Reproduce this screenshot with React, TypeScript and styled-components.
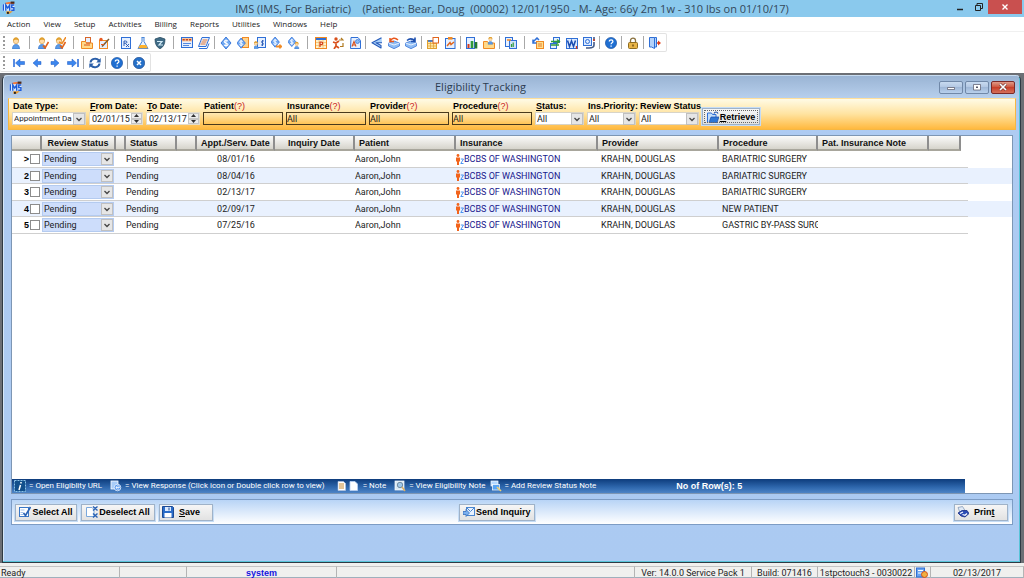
import React from "react";
import styled, { createGlobalStyle, css } from "styled-components";

const GlobalStyle = createGlobalStyle`
  * { box-sizing: border-box; }
  body { margin: 0; background: #fff; }
  button, input, select { font: inherit; color: inherit; margin: 0; padding: 0; }
`;

const uiFont = `"Roboto", "Liberation Sans", sans-serif`;
const boldFont = `"Liberation Sans", Arial, sans-serif`;
const chromeFont = `"Open Sans", "Noto Sans", sans-serif`;

/* ---------- Icons ---------- */

const B = "#2f6fd6";
const O = "#f08a24";

const person = (x = 0) => (
  <g transform={`translate(${x} 0)`}>
    <path d="M2.500 12c0-3 1-4.500 3.500-4.500s3.500 1.500 3.500 4.500z" fill="#5b9be8" stroke="#2c6cc4" strokeWidth=".6" />
    <circle cx="6" cy="4" r="2.700" fill="#ffdca8" stroke="#c78a32" strokeWidth=".5" />
    <path d="M3 4c0-5 6-5 6 0-1-1.500-4-2-6 0z" fill="#e0a030" />
  </g>
);
const diamond = (x = 0, y = 0, s = 1) => (
  <g transform={`translate(${x} ${y}) scale(${s})`}>
    <path d="M6 0l5 6-5 6-5-6z" fill="#6fa8f2" stroke={B} strokeWidth=".9" />
    <path d="M8 4.200C7 3 4.200 3.300 4.200 4.800S8 6 8 7.500 5 9 4 7.800M6 2.400v7.400" fill="none" stroke="#fff" strokeWidth="1.100" />
  </g>
);
const page = (x = 1, y = 0, w = 9, h = 12, c = B) => (
  <rect x={x + 0.5} y={y + 0.5} width={w - 1} height={h - 1} fill="#e6f0ff" stroke={c} />
);
const folder = (
  <path d="M.5 11.500v-7h4l1 1.500h6v5.500z" fill="#ffd98a" stroke={O} />
);
const check = (c: string) => <path d="M6 8.500l2 2.500L11.500 5" fill="none" stroke={c} strokeWidth="1.600" />;

const drawings: Record<string, React.ReactNode> = {
  user: person(),
  userCheck: <>{person(-1)}{check("#e0641c")}</>,
  userEdit: <>{person(-1)}{check("#e0641c")}<path d="M5 5l3 1.500L12 0" fill="none" stroke={O} strokeWidth="1.500" /></>,
  folderOpen: <>{page(4, 0, 6, 8, "#d8662a")}{folder}<path d="M3 8h6M5 6h4" stroke="#d8501c" /></>,
  memo: <>{page(1, 3, 9, 9, O)}<circle cx="3" cy="2.500" r="1.700" fill="#e85a20" /><path d="M4 9.500L11 2" stroke="#7a5a30" strokeWidth="1.500" /><path d="M3 7.500h3" stroke="#e85a20" /></>,
  rx: <>{page(1, 0, 10, 12)}<path d="M4 9V4h1.500c2 0 2 2.200 0 2.200H4M5.500 6.500L9 10M9 7L6 10" fill="none" stroke="#1d4fae" strokeWidth=".9" /></>,
  flask: <><path d="M4.500.5h3M5 .5v4L1 11.500h10L7 4.500v-4" fill="#eaf3ff" stroke="#4a86d8" /><path d="M3 8h6l1.800 3.300H1.200z" fill="#ffb32e" /></>,
  shield: <><path d="M6 .3l5 1.700c0 5-1.500 8-5 9.800C2.500 10 1 7 1 2z" fill="#3f6b86" stroke="#24465c" strokeWidth=".7" /><path d="M3 4.500h5L5 8h4" fill="none" stroke="#d4ecf8" strokeWidth="1.200" /></>,
  doc: <>{page(0, 0, 12, 11)}<rect x="1" y="1" width="10" height="3.500" fill="#f7c9a4" /><path d="M1.500 2.800h9" stroke="#c8481c" strokeWidth="1.600" strokeDasharray="2.300 .9" /><path d="M2 6.500h8M2 8.500h6" stroke={B} strokeWidth=".8" /></>,
  sheets: <><path d="M4 .5h7.500L8 9.500H.5z" fill="#e6f0ff" stroke={B} /><path d="M4.500 3h5M3.500 5h5M2.500 7h5" stroke="#e0641c" strokeWidth=".9" /><path d="M1 11.500h8l2-5" fill="none" stroke={B} /></>,
  dollar: diamond(),
  dollarPages: <><rect x="5.500" y=".5" width="6" height="10" fill="#ffd28c" stroke={O} />{diamond(-1, 1, 0.85)}</>,
  userDollar: <>{page(3, 0, 9, 11)}<path d="M8.500 3v6M10 4c-3-1-3 2-1.500 2s1.500 2.500-1.500 2" fill="none" stroke="#1d4fae" strokeWidth=".8" /><g transform="translate(-2 4) scale(.65)">{person()}</g></>,
  dollarKey: <>{diamond(-1, 0, 0.85)}<path d="M5 9.500h6M9 7.500v4" stroke={O} strokeWidth="1.800" /></>,
  dollarUser: <>{diamond(-1, 0, 0.8)}<g transform="translate(5 4.500) scale(.62)">{person()}</g></>,
  planner: <><rect x=".5" y=".5" width="11" height="11" fill="#fff1cc" stroke={O} /><path d="M1 2h10" stroke={B} strokeWidth="2" /><path d="M1 5.500h10M1 8.500h10M4 3v8M8 3v8" stroke="#f0b860" strokeWidth=".7" /><path d="M5 10V5h1.500c1.600 0 1.600 2.500 0 2.500H5" fill="none" stroke="#d23a1c" strokeWidth="1.200" /></>,
  people: <><circle cx="4" cy="2" r="1.700" fill="#d8501c" /><path d="M1 5l3 1 3-2M4 5v4l-2 3M4 9l3 2" fill="none" stroke="#d8501c" strokeWidth="1.700" /><path d="M7 3h4l-2-2M11 6v3.500H8" fill="none" stroke="#b07a20" strokeWidth="1.200" /></>,
  pageA: <><path d="M2 .5h7l2.500 3v8H1.500z" fill="#e6f0ff" stroke={B} /><path d="M3 9.500l2-5 2 5M3.700 8h2.800" fill="none" stroke="#d8501c" strokeWidth="1.100" /><circle cx="8.500" cy="4.500" r="2" fill="#8bbcf5" stroke={B} strokeWidth=".7" /></>,
  scissors: <><path d="M10.500.7L1 5.700l9 5.300V8.500L5 5.700h6" fill="#a8d0fa" stroke="#2559b8" strokeWidth="1.100" strokeLinejoin="round" /></>,
  boxIn: <><path d="M.5 6L6 4l5.500 2v3L6 11.700.5 9z" fill="#8fbcf4" stroke={B} strokeWidth=".7" /><path d="M.5 6L6 8l5.500-2" fill="none" stroke="#fff" strokeWidth=".8" /><path d="M2 1v3.500h4M2 4c2-3 5-4 8-1" fill="none" stroke="#e8571c" strokeWidth="1.500" /></>,
  boxOut: <><path d="M.5 6L6 4l5.500 2v3L6 11.700.5 9z" fill="#8fbcf4" stroke={B} strokeWidth=".7" /><path d="M.5 6L6 8l5.500-2" fill="none" stroke="#fff" strokeWidth=".8" /><path d="M10 .5v4H6M10 4C8 2 5 1 2 3.500" fill="none" stroke="#1d4fae" strokeWidth="1.600" /></>,
  calendarEdit: <><rect x=".5" y="3.500" width="9" height="8" fill="#ffe6a6" stroke="#e0a030" /><path d="M1 6.500h8M1 9h8M3.500 4v7M6.500 4v7" stroke="#e0a030" strokeWidth=".7" /><path d="M1 4h8" stroke={B} strokeWidth="1.600" /><rect x="6" y=".5" width="5.500" height="5.500" fill="#fff" stroke="#e0641c" /></>,
  clipboard: <><rect x="1.500" y="1.500" width="9.500" height="10" fill="#e6f0ff" stroke={B} /><rect x="4" y="0" width="4.500" height="2.600" fill={O} /><path d="M3 9l3-3.500 1 2 3-2.500" fill="none" stroke="#e0641c" strokeWidth="1.500" /></>,
  chart: <><rect x=".5" y=".5" width="8" height="11" fill="#e6f0ff" stroke={B} /><path d="M2.500 11V7" stroke="#d23a1c" strokeWidth="2" /><path d="M6 11V4" stroke="#2f9a3c" strokeWidth="2.600" /><path d="M10 11.500V5" stroke="#247a30" strokeWidth="2.600" /></>,
  folderUser: <>{folder}<g transform="translate(3.500 -.5) scale(.65)">{person()}</g></>,
  report: <>{page(0, 0, 8, 10)}<rect x="4.500" y="3.500" width="7" height="8" fill="#cfe2fb" stroke={B} /><path d="M6.500 10V7M8.200 10V5.500" stroke="#2f9a3c" strokeWidth="1.200" /><path d="M2 3h4" stroke={O} strokeWidth="1.500" /></>,
  noteArrow: <><rect x="4.500" y="4.500" width="7" height="7" fill="#ffe08c" stroke={O} /><path d="M6 7h4M6 9h4" stroke="#e0641c" strokeWidth=".8" /><path d="M1 5l4-4 2 2M1 2.500V6h3.500" fill="none" stroke={B} strokeWidth="1.500" /></>,
  sync: <><rect x="4.500" y=".5" width="6" height="5" fill="#e6f0ff" stroke={B} /><rect x="1.500" y="6.500" width="6" height="5" fill="#e6f0ff" stroke={B} /><path d="M2 4.500h8M8 2.500l2.500 2L8 6.500M10 8H2" fill="none" stroke="#2f9a3c" strokeWidth="1.300" /></>,
  word: <><rect x=".5" y="1.500" width="11" height="10" fill="#dceaff" stroke={B} /><path d="M1.500 3.500L3.500 9.500 5.500 4l2 5.500L9.500 3.500" fill="none" stroke="#1b4db0" strokeWidth="1.500" /><path d="M10.500 9v3" stroke="#d23a1c" strokeWidth="1.300" /></>,
  scan: <><rect x=".5" y=".5" width="8" height="8" fill="#dceaff" stroke={B} /><circle cx="4.500" cy="4.500" r="2" fill="none" stroke={B} /><path d="M11 0v4M11 5v3c0 2-2 3-5 3H3" fill="none" stroke="#445a86" strokeWidth="1.600" /><path d="M10 3h2" stroke="#d23a1c" strokeWidth="1.600" /></>,
  help: <><circle cx="6" cy="6" r="5.600" fill="#1f6fd2" stroke="#124a9a" strokeWidth=".6" /><path d="M4.300 4.600c0-2.500 3.600-2.200 3.600-.2C7.900 5.800 6.100 5.800 6.100 7.300M6.100 8.400v1.300" fill="none" stroke="#fff" strokeWidth="1.300" /></>,
  lock: <><path d="M3.500 6V3.500c0-3.300 5-3.300 5 0V6" fill="none" stroke="#8a7240" strokeWidth="1.300" /><rect x="1.500" y="5.500" width="9" height="6" rx="1" fill="#e8b448" stroke="#8e6c20" /><path d="M6 7.500v2" stroke="#5a4210" strokeWidth="1.300" /></>,
  exit: <><path d="M.5.500h5v11l-3-1.500h-2zM5.500.500h2v9.500h-2" fill="#b4d2fa" stroke={B} /><path d="M12 6L9 3.500v5z" fill="#e0401c" /><path d="M8 6h3" stroke="#e0401c" strokeWidth="1.500" /></>,
  first: <><path d="M1 2v8" stroke="#2266d8" strokeWidth="1.500" /><path d="M2.500 6L7 2v2.500h4.500v3H7V10z" fill="#3b86ee" stroke="#1c58c4" strokeWidth=".5" /></>,
  prev: <path d="M2 6l4.500-4v2.500H10v3H6.500V10z" fill="#3b86ee" stroke="#1c58c4" strokeWidth=".5" />,
  next: <path d="M10 6L5.500 2v2.500H2v3h3.500V10z" fill="#3b86ee" stroke="#1c58c4" strokeWidth=".5" />,
  last: <><path d="M11 2v8" stroke="#2266d8" strokeWidth="1.500" /><path d="M9.500 6L5 2v2.500H.5v3H5V10z" fill="#3b86ee" stroke="#1c58c4" strokeWidth=".5" /></>,
  refresh: <><path d="M1.500 5.500C2 1.500 7.500.5 10 3.500M10.500 6.500C10 10.500 4.500 11.500 2 8.500" fill="none" stroke="#2a5ea8" strokeWidth="2" /><path d="M11.700 1v4.500H7.200zM.3 11V6.500h4.500z" fill="#2a5ea8" /></>,
  close: <><circle cx="6" cy="6" r="5.700" fill="#2570c8" stroke="#123f86" strokeWidth=".6" /><path d="M4 4l4 4M8 4L4 8" stroke="#fff" strokeWidth="1.500" /></>,
  ims: <><path d="M3 3V1.500L6 1h5v2.500z" fill="#f07a3c" /><path d="M8 .5h3.500v2H8z" fill="#4a2a1c" /><rect x="0" y="3" width="11.500" height="6" fill="#dcecff" /><path d="M4 9.500h6l-3 2.300H4z" fill="#e89a30" /><circle cx="5.500" cy="11" r="1" fill="#222" /><path d="M1.200 3v6M3.500 9V3.700l1.800 2.800 1.800-2.800V9M11.300 3.700H9v2.400h2V8.500H8.500" fill="none" stroke="#1c5cd8" strokeWidth="1.300" /></>,
  open: <><path d="M.5 11.500V2h4l1 1.500H9V6" fill="#c4defa" stroke={B} /><path d="M2 11.500L4 6h8l-2 5.500z" fill="#2f76d4" stroke="#1c4fa6" strokeWidth=".7" /><path d="M7 2.500c1-2 3-2 4 0" fill="none" stroke="#1c4fa6" strokeWidth="1.200" /></>,
  selectAll: <><rect x=".5" y="1.500" width="9" height="9" fill="#fff" stroke="#3a78c8" /><path d="M1.500 4h4M1.500 6.500h3M1.500 8.500h3" stroke="#8ab4e8" strokeWidth=".8" /><path d="M4.500 7l2 2.500L11.500 1" fill="none" stroke="#2a62b4" strokeWidth="1.700" /></>,
  deselect: <><path d="M.5 1.500H6l2 2v7H.5z" fill="#fff" stroke="#7aa8dc" /><path d="M7 .5l4.500 4M11.500.5L7 4.500M7 7.500l4.500 4M11.500 7.500L7 11.500" stroke="#2a62b4" strokeWidth="1.400" /></>,
  save: <><path d="M.5.500h10l1 1v10H.5z" fill="#2a6cc8" stroke="#1b4a94" /><rect x="3" y="1" width="6" height="4" fill="#dceaff" /><rect x="2.500" y="7" width="7" height="4.500" fill="#fff" /><path d="M7 1.500v3" stroke="#1b4a94" /></>,
  send: <><rect x="3.500" y="1.500" width="8" height="8" fill="#e8f2ff" stroke="#4a86d0" /><path d="M4 2l3.500 3.500L11 2" fill="none" stroke="#4a86d0" /><path d="M0 5.500h3V3.500l3.500 3.500L3 10.500v-2H0z" fill="#7ab0f0" stroke="#2a62b4" strokeWidth=".7" /></>,
  print: <><path d="M1 1.500l4.500-1 2.500 4-5 2z" fill="#dfe9f6" stroke="#7890b0" strokeWidth=".7" /><path d="M1 7l4-2.500 5 0L12 7.500l-4 3.500-4-1z" fill="#2c4cb4" stroke="#182c84" strokeWidth=".8" /><path d="M3 7.500l3-1.500M5.500 8.500l2.500.8 2-1.800" fill="none" stroke="#fff" strokeWidth="1.200" /></>,
  info: <><rect x=".5" y=".5" width="11" height="11" fill="#12508c" stroke="#8cc4e8" strokeDasharray="2 1" /><path d="M7 2v1.500M6.500 5L5 10" stroke="#fff" strokeWidth="1.500" /></>,
  response: <><rect x="1" y="1" width="7" height="8" fill="#a8ccf8" stroke="#fff" strokeWidth=".8" /><circle cx="7.500" cy="7.500" r="3.300" fill="#4a90ec" stroke="#fff" strokeWidth=".7" /><path d="M6 7.500h3.500c0-2.500-3.500-2-3.500 0s2 2 3 1.200" fill="none" stroke="#fff" strokeWidth=".8" /></>,
  noteFull: <><path d="M2 1.500h5.500l2 2v7H2z" fill="#fff" stroke="#b8c8e0" strokeWidth=".6" /><path d="M3 4h5M3 6h5M3 8h5" stroke="#c88a30" /></>,
  noteBlank: <path d="M2 1.500h5l2.500 2.500v6.500H2z" fill="#fff" stroke="#b8d0f4" strokeWidth=".8" />,
  noteView: <><rect x="1" y="1" width="9" height="9" fill="#d8e8f4" stroke="#fff" strokeWidth=".7" /><circle cx="6" cy="5" r="2.700" fill="#a0c8e8" stroke="#607890" strokeWidth=".8" /><path d="M8 7l3 4" stroke="#e0b060" strokeWidth="1.400" /></>,
  noteAdd: <><rect x="1" y="1" width="7" height="5" fill="#b4d8ff" stroke="#fff" strokeWidth=".7" /><rect x="2.500" y="4.500" width="7" height="5.500" fill="#58a4f4" stroke="#fff" strokeWidth=".7" /><path d="M7 7l4 4" stroke="#f0d070" strokeWidth="1.600" /></>,
  sysTray: <><rect x=".5" y="1" width="8" height="9" fill="#6aa4f0" stroke={B} /><path d="M2 3.500h5M2 6h4" stroke="#fff" /><circle cx="8.500" cy="7.500" r="3" fill="#f0b040" stroke="#d2501c" /></>,
};

const IconSvg = styled.svg<{ $size: number }>`
  display: block;
  flex: none;
  width: ${(p) => p.$size}px;
  height: ${(p) => p.$size}px;
`;
const Icon = ({ name, size = 12 }: { name: string; size?: number }) => (
  <IconSvg $size={size} viewBox="0 0 12 12" aria-hidden="true">
    {drawings[name]}
  </IconSvg>
);

/* ---------- Application chrome ---------- */

const AppFrame = styled.div`
  min-height: 100vh;
  display: flex;
  flex-direction: column;
  font: 9px/12px ${uiFont};
  color: #1c1c1c;
  background: #fff;
`;

const TitleBar = styled.header`
  display: grid;
  grid-template-columns: 90px 1fr 90px;
  align-items: start;
  height: 17px;
  background: #8ac9ed;
  padding: 0 2px;
`;
const TitleIcon = styled.div`
  padding-top: 1px;
`;
const AppTitle = styled.h1`
  margin: 0;
  text-align: center;
  font: 400 11px/17px ${chromeFont};
  color: #34485a;
  white-space: pre;
`;
const WindowButtons = styled.div`
  display: flex;
  justify-content: flex-end;
`;
const ChromeButton = styled.button<{ $danger?: boolean }>`
  display: grid;
  place-items: center;
  border: 0;
  width: ${(p) => (p.$danger ? 34 : 19)}px;
  height: 14px;
  background: ${(p) => (p.$danger ? "#c9504f" : "transparent")};
`;
const Glyph = styled.svg`
  display: block;
  width: 8px;
  height: 8px;
`;

const MenuBar = styled.nav`
  display: flex;
  gap: 13px;
  height: 15px;
  padding: 0 7px;
  border-bottom: 1px solid #f0f0f0;
`;
const MenuLink = styled.a`
  font: 8px/14px ${chromeFont};
  color: #222;
  text-decoration: none;
`;

const ToolRow = styled.div`
  display: flex;
  padding-top: 1px;
`;
const Toolbar = styled.div<{ $gap: number }>`
  display: flex;
  align-items: center;
  height: 19px;
  padding: 0 5px 0 3px;
  border: 1px solid #e2e2e2;
  border-left: 0;
  border-radius: 2px;
  & > button + button {
    margin-left: ${(p) => p.$gap}px;
  }
`;
const Grip = styled.span<{ $lead: number }>`
  width: 2px;
  height: 13px;
  margin-right: ${(p) => p.$lead}px;
  background: repeating-linear-gradient(#9a9a9a 0 2px, transparent 2px 4px);
`;
const ToolButton = styled.button`
  border: 0;
  background: none;
`;
const Separator = styled.span<{ $wide?: boolean }>`
  width: 1px;
  height: 13px;
  background: #a8a8a8;
  margin: ${(p) => (p.$wide ? "0 7px" : "0 5px 0 4px")};
`;

/* ---------- Child window ---------- */

const Workspace = styled.main`
  flex: 1;
  display: flex;
  margin-top: 1px;
  padding: 2px 3px 0 2px;
  background: #6c6f75;
`;
const ChildWindow = styled.section`
  flex: 1;
  min-width: 0;
  display: flex;
  flex-direction: column;
  padding: 0 4px 2px 5px;
  border: 1px solid #2f3a44;
  border-top-color: #c8dcf0;
  border-radius: 5px 5px 0 0;
  background: linear-gradient(#9ab4d4 0, #b7cfec 22px, #aecbf2 24px, #abcaf2 100%);
  box-shadow: inset -1px -1px #58c4d8, inset 1px 0 #d6e6f6;
`;
const ChildTitleBar = styled.div`
  display: grid;
  grid-template-columns: 80px 1fr 143px;
  align-items: center;
  height: 22px;
  padding: 0 1px;
`;
const ChildTitle = styled.h2`
  margin: 0;
  text-align: center;
  font: 400 11px/22px ${chromeFont};
  color: #2c3c50;
`;
const ChildButtons = styled.div`
  display: flex;
  justify-content: flex-end;
  gap: 2px;
`;
const ChildButton = styled.button<{ $danger?: boolean }>`
  display: grid;
  place-items: center;
  width: 24px;
  height: 13px;
  border: 1px solid ${(p) => (p.$danger ? "#7c2a28" : "#7088a8")};
  border-radius: 2px;
  background: ${(p) =>
    p.$danger
      ? "linear-gradient(#e09a88, #cc5038 50%, #c8402a 50%, #d4705a)"
      : "linear-gradient(#c8daf0, #b0c6e2 50%, #a0b8d8 50%, #b8d0ec)"};
`;

const FilterBar = styled.form`
  display: flex;
  align-items: flex-end;
  gap: 3px;
  height: 32px;
  padding: 0 4px 4px 3px;
  border: 1px solid #f6b742;
  border-top-color: #ffdf9a;
  background: linear-gradient(#fffbe6, #ffe3a0 50%, #ffb93f);
`;
const Field = styled.div<{ $width: number }>`
  width: ${(p) => p.$width}px;
`;
const FieldLabel = styled.label`
  display: block;
  padding-left: 1px;
  font: 700 9px/12px ${boldFont};
  color: #000;
  white-space: nowrap;
`;
const Hint = styled.span`
  font-weight: 400;
  color: #c8201c;
`;
const SelectBox = styled.div<{ $height: number; $tone?: string; $small?: boolean }>`
  display: grid;
  height: ${(p) => p.$height}px;
  background: ${(p) => p.$tone ?? "#fff"};
  border: 1px solid ${(p) => (p.$tone ? "#b4cbf0" : "#d8d4c8")};
  font-size: ${(p) => (p.$small ? 8 : 9)}px;
  & > * {
    grid-area: 1 / 1;
  }
`;
const SelectInput = styled.select`
  width: 100%;
  height: 100%;
  padding: 0 11px 0 1px;
  border: 0;
  background: none;
  appearance: none;
  text-overflow: clip;
`;
const Arrow = styled.span`
  display: grid;
  place-items: center;
  justify-self: end;
  width: 12px;
  height: 100%;
  border: 1px solid #c0c0c0;
  background: #e6e6e6;
  pointer-events: none;
`;
const SelectControl = ({
  id, value, height = 13, tone, label, small,
}: { id?: string; value: string; height?: number; tone?: string; label?: string; small?: boolean }) => (
  <SelectBox $height={height} $tone={tone} $small={small}>
    <SelectInput id={id} aria-label={label} defaultValue={value}>
      <option>{value}</option>
    </SelectInput>
    <Arrow>
      <Glyph viewBox="0 0 8 8"><path d="M1.500 3L4 5.500 6.500 3" fill="none" stroke="#444" strokeWidth="1.300" /></Glyph>
    </Arrow>
  </SelectBox>
);
const DateBox = styled.div`
  display: flex;
  height: 13px;
  background: #fff;
  border: 1px solid #e4dcc8;
`;
const DateInput = styled.input`
  flex: 1;
  min-width: 0;
  padding-left: 2px;
  border: 0;
  background: none;
`;
const SpinButtons = styled.div`
  display: flex;
  flex-direction: column;
  width: 11px;
`;
const SpinButton = styled.button`
  flex: 1;
  display: grid;
  place-items: center;
  border: 1px solid #c4c4c4;
  background: #ececec;
  min-height: 0;
  overflow: hidden;
`;
const SpinGlyph = styled.svg`
  display: block;
  width: 5px;
  height: 3px;
`;
const LookupInput = styled.input`
  display: block;
  width: 100%;
  height: 13px;
  border: 1px solid #4a3a1c;
  background: linear-gradient(#ffe9b4, #ffc457);
`;

const pushed = css`
  outline: 1px dotted #666;
  outline-offset: -3px;
`;
const PushButton = styled.button<{ $width: number; $focused?: boolean; $spread?: boolean }>`
  display: flex;
  align-items: center;
  justify-content: ${(p) => (p.$spread ? "flex-start" : "center")};
  gap: ${(p) => (p.$spread ? 5 : 1)}px;
  width: ${(p) => p.$width}px;
  height: 17px;
  padding: 0 2px;
  border: 1px solid #9fb2c8;
  background: linear-gradient(#f6f6f6, #e2e2e2);
  box-shadow: 0 0 0 1px #c4dcf6;
  font: 700 9px/12px ${boldFont};
  color: #000;
  white-space: nowrap;
  ${(p) => p.$focused && pushed}
`;

/* ---------- Grid ---------- */

const GridPanel = styled.section`
  flex: 1;
  display: flex;
  flex-direction: column;
  margin: 5px 3px 0;
  border: 1px solid #7d96b4;
  background: #fff;
`;
const GridTable = styled.table`
  width: 100%;
  table-layout: fixed;
  border-collapse: separate;
  border-spacing: 0;
`;
const HeadCell = styled.th<{ $align?: string; $plain?: boolean }>`
  height: 15px;
  padding: 0 4px;
  overflow: hidden;
  white-space: nowrap;
  text-align: ${(p) => p.$align ?? "left"};
  font: 700 9px/12px ${boldFont};
  color: #111;
  ${(p) =>
    !p.$plain &&
    css`
      border-right: 2px solid #8e8e8e;
      border-bottom: 2px solid #a8a69c;
      background: linear-gradient(#fbfbfa, #d6d4cc);
    `}
`;
const Row = styled.tr`
  height: 17px;
  &:nth-child(even) {
    height: 16px;
    background: #e9f1fe;
  }
`;
const Cell = styled.td<{ $align?: string; $line?: boolean }>`
  padding: 0 3px;
  overflow: hidden;
  white-space: nowrap;
  line-height: 12px;
  text-align: ${(p) => p.$align ?? "left"};
  border-bottom: 1px solid ${(p) => (p.$line === false ? "transparent" : "#cfcfcf")};
`;
const TightCell = styled(Cell)`
  padding: 0 2px 0 0;
`;
const RowMarker = styled.div`
  display: flex;
  align-items: center;
  justify-content: flex-end;
  gap: 1px;
  font: 700 9px/12px ${boldFont};
  color: #000;
`;
const Tick = styled.input`
  appearance: none;
  width: 10px;
  height: 10px;
  border: 1px solid #8c8c8c;
  background: #fff;
`;
const Payer = styled.a`
  display: flex;
  align-items: center;
  color: #17178c;
  text-decoration: none;
`;
const PayerMarks = styled.svg`
  flex: none;
  width: 8px;
  height: 11px;
`;
const Filler = styled.div`
  flex: 1;
  min-height: 32px;
`;
const Legend = styled.footer`
  display: flex;
  align-items: center;
  height: 14px;
  margin-right: 47px;
  font-size: 8px;
  color: #fff;
  background: linear-gradient(#0d3c7c, #2f68ae 60%, #4d84c6);
`;
const LegendItem = styled.span<{ $lead: number }>`
  display: flex;
  align-items: center;
  gap: 3px;
  margin-left: ${(p) => p.$lead}px;
  white-space: nowrap;
`;
const NoteIcons = styled.span`
  display: flex;
`;
const RowCount = styled.strong`
  margin-left: 80px;
  font: 700 9px/12px ${boldFont};
  white-space: nowrap;
`;

const ActionBar = styled.div`
  display: grid;
  grid-template-columns: 15fr auto 16fr;
  align-items: center;
  height: 26px;
  margin: 5px 3px 35px;
  padding: 0 4px 0 3px;
  border: 1px solid #7d9cc4;
  background: linear-gradient(#b8d4f6, #fff);
`;
const ActionGroup = styled.div<{ $end?: boolean }>`
  display: flex;
  gap: 4px;
  justify-content: ${(p) => (p.$end ? "flex-end" : "flex-start")};
`;

const StatusBar = styled.footer`
  display: grid;
  grid-template-columns: 120px 67px 150px 1fr 117px 66px 97px 16px 93px;
  height: 15px;
  padding-top: 3px;
  background: #f0f0ee;
  border-bottom: 1px solid #9fb0bc;
`;
const StatusCell = styled.div<{ $center?: boolean }>`
  display: flex;
  align-items: center;
  justify-content: ${(p) => (p.$center ? "center" : "flex-start")};
  padding: 0 1px;
  border-top: 1px solid #c4c4c4;
  border-right: 1px solid #b4b4b4;
  white-space: nowrap;
`;
const Operator = styled.strong`
  font: 700 9px/12px ${boldFont};
  color: #1414e0;
`;

/* ---------- Data ---------- */

const menus = [
  "Action", "View", "Setup", "Activities", "Billing", "Reports", "Utilities", "Windows", "Help",
];
const mainTools =
  "user || userCheck userEdit || folderOpen memo | rx flask shield || doc sheets | dollar dollarPages userDollar dollarKey dollarUser || planner people pageA | scissors boxIn boxOut | calendarEdit clipboard | chart folderUser | report || noteArrow sync word scan | help | lock | exit".split(" ");
const navTools = "first prev next last | refresh | help | close".split(" ");

const columns: { title: string; width: number; align?: string }[] = [
  { title: "", width: 30 },
  { title: "Review Status", width: 74, align: "center" },
  { title: "", width: 10 },
  { title: "Status", width: 51 },
  { title: "", width: 20 },
  { title: "Appt./Serv. Date", width: 78, align: "center" },
  { title: "Inquiry Date", width: 80, align: "center" },
  { title: "Patient", width: 101 },
  { title: "Insurance", width: 142 },
  { title: "Provider", width: 121 },
  { title: "Procedure", width: 99 },
  { title: "Pat. Insurance Note", width: 111 },
  { title: "", width: 32 },
];
const rows = [
  { mark: ">", date: "08/01/16", procedure: "BARIATRIC SURGERY" },
  { mark: "2", date: "08/04/16", procedure: "BARIATRIC SURGERY" },
  { mark: "3", date: "02/13/17", procedure: "BARIATRIC SURGERY" },
  { mark: "4", date: "02/09/17", procedure: "NEW PATIENT" },
  { mark: "5", date: "07/25/16", procedure: "GASTRIC BY-PASS SURGERY" },
];

const ToolStrip = ({ tools, gap, lead }: { tools: string[]; gap: number; lead: number }) => (
  <ToolRow>
    <Toolbar $gap={gap} role="toolbar">
      <Grip $lead={lead} />
      {tools.map((t, i) =>
        t.startsWith("|") ? (
          <Separator key={i} $wide={t === "||"} />
        ) : (
          <ToolButton key={i} type="button" aria-label={t}>
            <Icon name={t} />
          </ToolButton>
        )
      )}
    </Toolbar>
  </ToolRow>
);

const DateField = ({ id, value }: { id: string; value: string }) => (
  <DateBox>
    <DateInput id={id} defaultValue={value} />
    <SpinButtons>
      <SpinButton type="button" aria-label="Later">
        <SpinGlyph viewBox="0 0 5 3"><path d="M0 3L2.500 0 5 3z" fill="#333" /></SpinGlyph>
      </SpinButton>
      <SpinButton type="button" aria-label="Earlier">
        <SpinGlyph viewBox="0 0 5 3"><path d="M0 0l2.500 3L5 0z" fill="#333" /></SpinGlyph>
      </SpinButton>
    </SpinButtons>
  </DateBox>
);

const LookupField = ({ name, value = "" }: { name: string; value?: string }) => (
  <Field $width={80}>
    <FieldLabel htmlFor={name}>{name}<Hint>(?)</Hint></FieldLabel>
    <LookupInput id={name} defaultValue={value} />
  </Field>
);

export default function App() {
  return (
    <AppFrame>
      <GlobalStyle />
      <TitleBar>
        <TitleIcon><Icon name="ims" size={13} /></TitleIcon>
        <AppTitle>{"IMS (IMS, For Bariatric)    (Patient: Bear, Doug  (00002) 12/01/1950 - M- Age: 66y 2m 1w - 310 lbs on 01/10/17)"}</AppTitle>
        <WindowButtons>
          <ChromeButton aria-label="Minimize"><Glyph viewBox="0 0 8 8"><path d="M1 6.500h6" stroke="#222" strokeWidth="1.500" /></Glyph></ChromeButton>
          <ChromeButton aria-label="Restore"><Glyph viewBox="0 0 8 8"><path d="M.5 2.500h5v5h-5zM2 2.500v-2h5.500v5h-2" fill="none" stroke="#222" /></Glyph></ChromeButton>
          <ChromeButton $danger aria-label="Close"><Glyph viewBox="0 0 8 8"><path d="M1.500 1.500l5 5M6.500 1.500l-5 5" stroke="#fff" strokeWidth="1.400" /></Glyph></ChromeButton>
        </WindowButtons>
      </TitleBar>
      <MenuBar>
        {menus.map((m) => <MenuLink key={m} href="#">{m}</MenuLink>)}
      </MenuBar>
      <ToolStrip tools={mainTools} gap={5} lead={5} />
      <ToolStrip tools={navTools} gap={6} lead={8} />

      <Workspace>
        <ChildWindow>
          <ChildTitleBar>
            <Icon name="ims" size={13} />
            <ChildTitle>Eligibility Tracking</ChildTitle>
            <ChildButtons>
              <ChildButton aria-label="Minimize"><Glyph viewBox="0 0 8 8"><path d="M.5 4.500h7v2h-7z" fill="#fff" stroke="#556" strokeWidth=".7" /></Glyph></ChildButton>
              <ChildButton aria-label="Maximize"><Glyph viewBox="0 0 8 8"><path d="M.5 1.500h7v5.500h-7z" fill="#fff" stroke="#556" strokeWidth=".7" /><path d="M3 3.500h2v1.500H3z" fill="#556" /></Glyph></ChildButton>
              <ChildButton $danger aria-label="Close"><Glyph viewBox="0 0 8 8"><path d="M1 1l6 6M7 1L1 7" stroke="#633" strokeWidth="2.600" /><path d="M1 1l6 6M7 1L1 7" stroke="#fff" strokeWidth="1.700" /></Glyph></ChildButton>
            </ChildButtons>
          </ChildTitleBar>

          <FilterBar onSubmit={(e) => e.preventDefault()}>
            <Field $width={74}>
              <FieldLabel htmlFor="dateType">Date Type:</FieldLabel>
              <SelectControl id="dateType" value="Appointment Da" small />
            </Field>
            <Field $width={54}>
              <FieldLabel htmlFor="fromDate"><u>F</u>rom Date:</FieldLabel>
              <DateField id="fromDate" value="02/01/15" />
            </Field>
            <Field $width={54}>
              <FieldLabel htmlFor="toDate"><u>T</u>o Date:</FieldLabel>
              <DateField id="toDate" value="02/13/17" />
            </Field>
            <LookupField name="Patient" />
            <LookupField name="Insurance" value="All" />
            <LookupField name="Provider" value="All" />
            <LookupField name="Procedure" value="All" />
            <Field $width={49}>
              <FieldLabel htmlFor="status"><u>S</u>tatus:</FieldLabel>
              <SelectControl id="status" value="All" />
            </Field>
            <Field $width={49}>
              <FieldLabel htmlFor="priority">Ins.Priority:</FieldLabel>
              <SelectControl id="priority" value="All" />
            </Field>
            <Field $width={60}>
              <FieldLabel htmlFor="review">Review Status</FieldLabel>
              <SelectControl id="review" value="All" />
            </Field>
            <PushButton $width={58} $focused type="submit"><Icon name="open" /><span><u>R</u>etrieve</span></PushButton>
          </FilterBar>

          <GridPanel>
            <GridTable>
              <colgroup>
                {columns.map((c, i) => <col key={i} style={{ width: c.width }} />)}
                <col style={{ width: 7 }} />
                <col />
              </colgroup>
              <thead>
                <tr>
                  {columns.map((c, i) => <HeadCell key={i} $align={c.align}>{c.title}</HeadCell>)}
                  <HeadCell $plain /><HeadCell $plain />
                </tr>
              </thead>
              <tbody>
                {rows.map((r) => (
                  <Row key={r.mark}>
                    <TightCell>
                      <RowMarker>{r.mark}<Tick type="checkbox" aria-label={`Select row ${r.mark}`} /></RowMarker>
                    </TightCell>
                    <TightCell><SelectControl label="Review status" value="Pending" tone="#cdddfb" height={14} /></TightCell>
                    <Cell />
                    <TightCell>Pending</TightCell>
                    <Cell />
                    <Cell $align="center">{r.date}</Cell>
                    <Cell />
                    <TightCell>Aaron,John</TightCell>
                    <TightCell>
                      <Payer href="#">
                        <PayerMarks viewBox="0 0 8 11">
                          <circle cx="2" cy="1.500" r="1.400" fill="#f2641c" />
                          <path d="M0 3.500h4v4H3V11H1V7.500H0z" fill="#f2641c" />
                          <path d="M4.800 5h2.700L4.800 9.500h2.700" fill="none" stroke="#3a8af0" strokeWidth=".9" />
                        </PayerMarks>
                        BCBS OF WASHINGTON
                      </Payer>
                    </TightCell>
                    <Cell>KRAHN, DOUGLAS</Cell>
                    <Cell>{r.procedure}</Cell>
                    <Cell /><Cell /><Cell />
                    <Cell $line={false} />
                  </Row>
                ))}
              </tbody>
            </GridTable>
            <Filler />
            <Legend>
              <LegendItem $lead={2}><Icon name="info" />= Open Eligiblity URL</LegendItem>
              <LegendItem $lead={8}><Icon name="response" />= View Response (Click icon or Double click row to view)</LegendItem>
              <LegendItem $lead={11}><NoteIcons><Icon name="noteFull" /><Icon name="noteBlank" /></NoteIcons>= Note</LegendItem>
              <LegendItem $lead={8}><Icon name="noteView" />= View Eligibility Note</LegendItem>
              <LegendItem $lead={4}><Icon name="noteAdd" />= Add Review Status Note</LegendItem>
              <RowCount>No of Row(s): 5</RowCount>
            </Legend>
          </GridPanel>

          <ActionBar>
            <ActionGroup>
              <PushButton $width={62}><Icon name="selectAll" />Select All</PushButton>
              <PushButton $width={74}><Icon name="deselect" />Deselect All</PushButton>
              <PushButton $width={54} $spread><Icon name="save" /><span><u>S</u>ave</span></PushButton>
            </ActionGroup>
            <PushButton $width={76}><Icon name="send" />Send Inquiry</PushButton>
            <ActionGroup $end>
              <PushButton $width={54} $spread><Icon name="print" /><span>Prin<u>t</u></span></PushButton>
            </ActionGroup>
          </ActionBar>
        </ChildWindow>
      </Workspace>

      <StatusBar>
        <StatusCell>Ready</StatusCell>
        <StatusCell />
        <StatusCell $center><Operator>system</Operator></StatusCell>
        <StatusCell />
        <StatusCell $center>Ver: 14.0.0 Service Pack 1</StatusCell>
        <StatusCell $center>Build: 071416</StatusCell>
        <StatusCell $center>1stpctouch3 - 0030022</StatusCell>
        <StatusCell><Icon name="sysTray" /></StatusCell>
        <StatusCell $center>02/13/2017</StatusCell>
      </StatusBar>
    </AppFrame>
  );
}
